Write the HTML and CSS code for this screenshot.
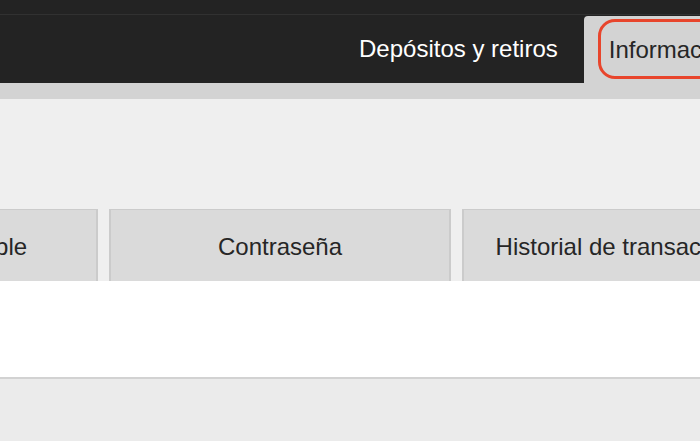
FILE: index.html
```html
<!DOCTYPE html>
<html lang="es">
<head>
<meta charset="utf-8">
<title>Cuenta</title>
<link rel="stylesheet" href="styles.css">
</head>
<body>
<div class="page">
  <div class="topbar"></div>
  <nav class="nav">
    <a class="nav-item">Depósitos y retiros</a>
    <a class="nav-item active">Información personal<span class="highlight"></span></a>
  </nav>
  <div class="band"></div>
  <section class="panel">
    <div class="tabs">
      <div class="tab first">Saldo disponible</div>
      <div class="tab">Contraseña</div>
      <div class="tab">Historial de transacciones</div>
    </div>
    <div class="content"></div>
  </section>
  <div class="footer"></div>
</div>
</body>
</html>
```
FILE: styles.css
```css
html, body {
  margin: 0;
  padding: 0;
  overflow: hidden;
  background: #ebebeb;
}
body {
  font-family: "Liberation Sans", Arial, Helvetica, sans-serif;
  width: 700px;
}
.page {
  width: 1100px;
}
.topbar {
  height: 14px;
  background: #232323;
  border-bottom: 1px solid #313131;
}
.nav {
  height: 68px;
  background: #232323;
  display: flex;
  align-items: stretch;
  padding-left: 333px;
}
.nav-item {
  display: flex;
  align-items: center;
  padding: 0 26px;
  color: #ffffff;
  font-size: 24px;
  white-space: nowrap;
}
.nav-item.active {
  position: relative;
  margin-top: 1px;
  padding-left: 25px;
  background: #d3d3d3;
  color: #262626;
  border-radius: 4px 4px 0 0;
}
.highlight {
  position: absolute;
  left: 14px;
  top: 3px;
  width: 300px;
  height: 60px;
  box-sizing: border-box;
  border: 3.5px solid #e8452c;
  border-radius: 17px;
}
.band {
  height: 16px;
  background: #d3d3d3;
}
.panel {
  background: #efefef;
  padding-top: 110px;
}
.tabs {
  display: flex;
  gap: 11px;
  margin-left: -220px;
  height: 72px;
}
.tab {
  box-sizing: border-box;
  width: 342px;
  flex: none;
  display: flex;
  align-items: center;
  justify-content: center;
  background: #dadada;
  border: 2px solid #cbcbcb;
  border-top-width: 1px;
  border-bottom: none;
  color: #262626;
  font-size: 24px;
  white-space: nowrap;
  padding-top: 2px;
}
.tab.first {
  width: 318px;
}
.content {
  height: 96px;
  background: #ffffff;
  border-bottom: 2px solid #d2d2d2;
}
.footer {
  height: 70px;
  background: #ebebeb;
}
```
